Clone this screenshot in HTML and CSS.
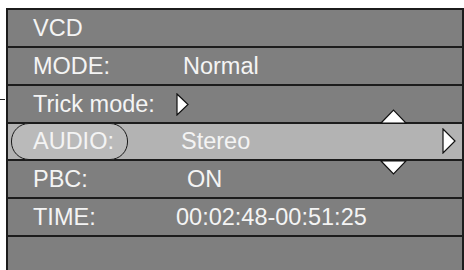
FILE: index.html
```
<!DOCTYPE html>
<html>
<head>
<meta charset="utf-8">
<link rel="stylesheet" href="styles.css">
</head>
<body>
<div class="screen">
  <div class="row"><span class="label">VCD</span></div>
  <div class="row"><span class="label">MODE:</span><span class="value v-normal">Normal</span></div>
  <div class="row tick"><span class="label">Trick mode:</span><span class="value"><svg class="play" width="13" height="23" viewBox="0 0 13 23"><polygon points="1,1 12,11.5 1,22" /></svg></span></div>
  <div class="row selected">
    <span class="label pill">AUDIO:</span><span class="value v-stereo">Stereo</span>
    <svg class="arrow up" width="27" height="15" viewBox="0 0 27 15"><polygon points="1,14 13.5,1 26,14" /></svg>
    <svg class="arrow down" width="27" height="15" viewBox="0 0 27 15"><polygon points="1,1 13.5,14 26,1" /></svg>
    <svg class="arrow right" width="14" height="26" viewBox="0 0 14 26"><polygon points="1,1 13,13 1,25" /></svg>
  </div>
  <div class="row"><span class="label">PBC:</span><span class="value v-on">ON</span></div>
  <div class="row"><span class="label">TIME:</span><span class="value v-time">00:02:48-00:51:25</span></div>
  <div class="row last"></div>
</div>
</body>
</html>
```
FILE: styles.css
```
html, body {
  margin: 0;
  padding: 0;
  background: #ffffff;
  overflow: hidden;
}
body {
  width: 464px;
  height: 270px;
}
.screen {
  margin: 8px 0 0 6px;
  width: 454px;
  border: 2px solid #1c1c1c;
  border-bottom: none;
  font-family: "Liberation Sans", Arial, sans-serif;
  font-size: 23.5px;
  color: #f4f4f4;
}
.row {
  position: relative;
  display: grid;
  grid-template-columns: 168px 1fr;
  align-items: center;
  height: 36px;
  background: #7f7f7f;
  border-bottom: 2px solid #1c1c1c;
}
.row.selected {
  height: 35px;
  background: #b3b3b3;
}
.row.last {
  height: 40px;
  border-bottom: none;
}
.label {
  padding-left: 25px;
  white-space: nowrap;
}
.value {
  white-space: nowrap;
  display: flex;
  align-items: center;
}
.v-normal { padding-left: 7px; }
.v-stereo { padding-left: 5px; }
.v-on { padding-left: 11px; }
.v-time { padding-left: 0; }
.play {
  display: block;
}
.play polygon, .arrow polygon {
  fill: #ffffff;
  stroke: #111111;
  stroke-width: 1.2;
  stroke-linejoin: miter;
}
.selected::before {
  content: "";
  position: absolute;
  box-sizing: border-box;
  left: 3px;
  top: -1px;
  width: 117px;
  height: 37px;
  border: 1px solid #1a1a1a;
  border-radius: 18px / 18px;
  background: #bababa;
  z-index: 0;
}
.pill {
  position: relative;
  z-index: 1;
}
.arrow {
  position: absolute;
  z-index: 2;
}
.arrow.up {
  left: 372px;
  top: -15px;
}
.arrow.down {
  left: 372px;
  top: 36px;
}
.arrow.right {
  left: 434px;
  top: 4px;
}
.tick::before {
  content: "";
  position: absolute;
  left: -8px;
  top: 13px;
  width: 5px;
  height: 1px;
  background: #222222;
}
```
